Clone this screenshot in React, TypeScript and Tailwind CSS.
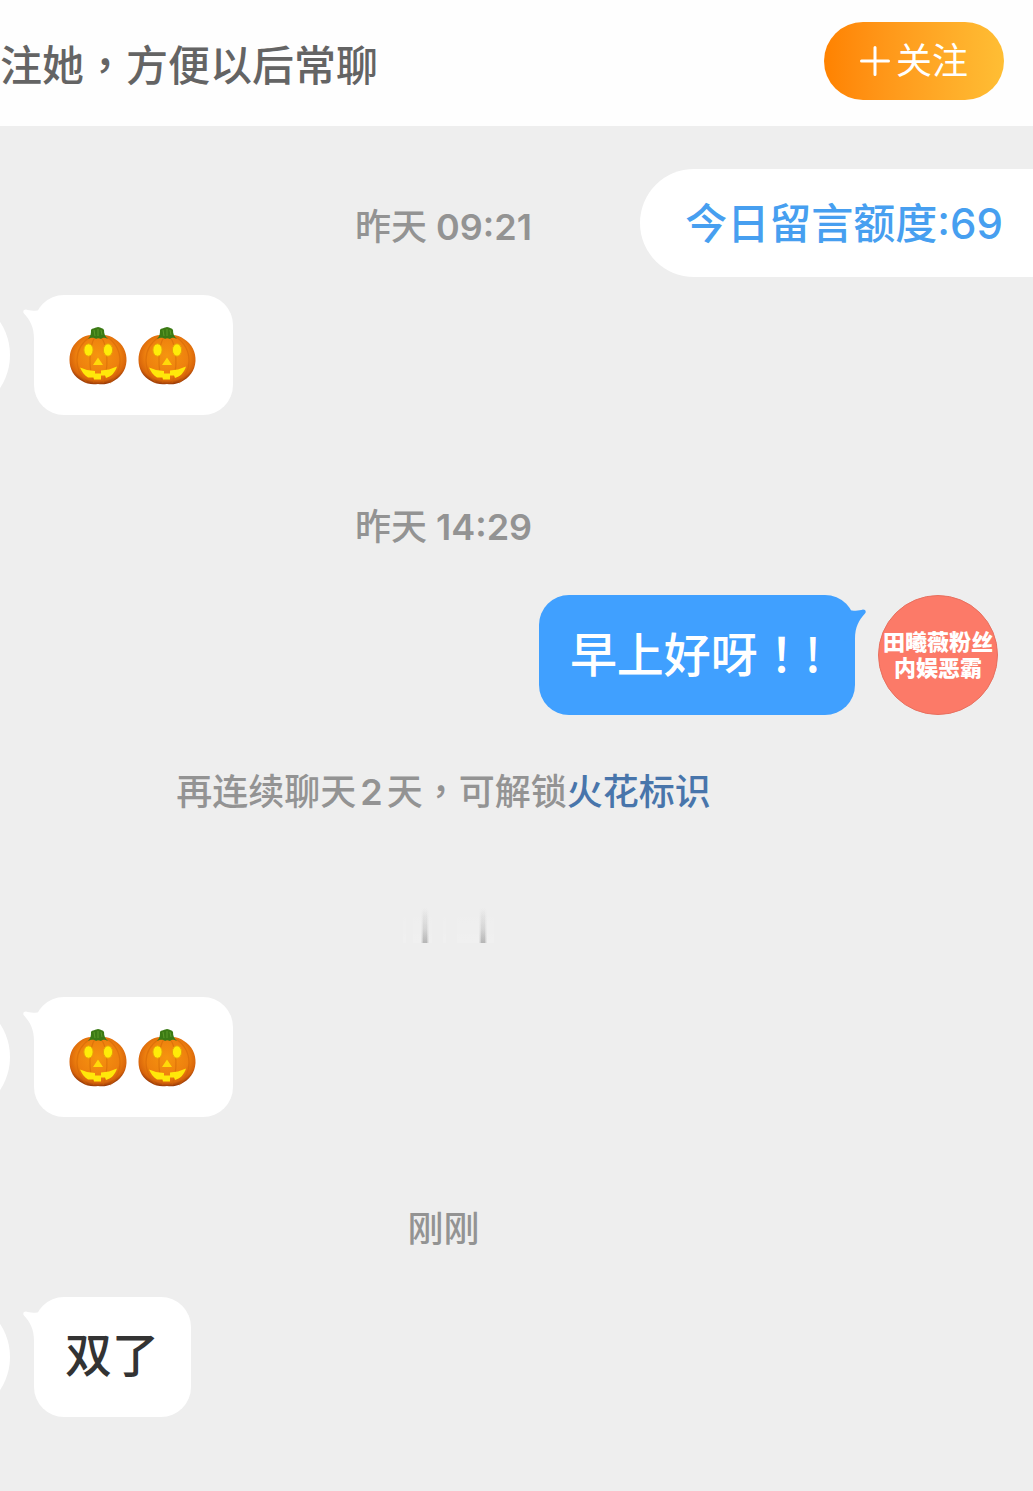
import React from 'react';

type Message =
  | { kind: 'pumpkins' }
  | { kind: 'text'; text: React.ReactNode };

// Full-width punctuation sits in the middle of its cell in the TC face
const Punct: React.FC<{ children: React.ReactNode }> = ({ children }) => (
  <span className="font-['Noto_Sans_CJK_TC',sans-serif]">{children}</span>
);

const Pumpkin: React.FC<{ id: string }> = ({ id }) => (
  <svg width="58" height="58" viewBox="0 0 58 58" role="img" aria-label="南瓜">
    <defs>
      <radialGradient id={id} cx="50%" cy="42%" r="58%">
        <stop offset="0" stopColor="#f6950f" />
        <stop offset="0.65" stopColor="#ee800e" />
        <stop offset="0.88" stopColor="#d8650b" />
        <stop offset="1" stopColor="#9c3c08" />
      </radialGradient>
    </defs>
    <path
      d="M28 9C34 7 41 8 46 12C54 17 58 25 57.5 34C57 44 51 51 43 55C38 57.5 33 57.5 29 57C24 57.5 18 57.5 13 54C5 50 0.5 42 0.5 33C0.5 24 4 17 11 12C16 8 23 7 28 9Z"
      fill={`url(#${id})`}
    />
    <g fill="none" stroke="#d06408" strokeWidth="1.2" opacity="0.5">
      <path d="M21 10C12 16 8 23 8 33C8 43 12 50 18 56" />
      <path d="M26 10C20 19 19 42 25 56" />
      <path d="M32 10C39 19 40 42 34 56" />
      <path d="M38 10C47 16 51 24 51 34C51 43 47 50 41 56" />
    </g>
    <path
      d="M19 12C22 9 22 6 22 3C23 1 27 1 29 0C32 1 34 1 35 3C35 7 36 9 39 12C36 11 34 10 32 12C30 11 28 11 27 12C24 10 22 11 19 12Z"
      fill="#3b7a14"
    />
    <path d="M25 3L26 9M29 2V9M32 3L33 8" stroke="#5c9a28" strokeWidth="1" fill="none" />
    <ellipse cx="19.5" cy="23" rx="4.6" ry="6.2" fill="#ffec08" stroke="#e8a008" strokeWidth="1" />
    <ellipse cx="39" cy="23" rx="4.6" ry="6.2" fill="#ffec08" stroke="#e8a008" strokeWidth="1" />
    <path d="M29 30.5L34 38H24Z" fill="#ffd90a" />
    <path
      d="M11 40.5L18 43L26 44V46.5H32V43.5L40 42.5L48 39.5C46 46 42 49.5 37 51L36 48.5H32V52.5H25L24.5 50.5H19C15 48 13 45 11 40.5Z"
      fill="#ffe80a"
    />
  </svg>
);

const Tail: React.FC<{ className: string }> = ({ className }) => (
  <svg width="24" height="34" viewBox="0 0 24 34" className={`absolute top-[14px] ${className}`} aria-hidden="true">
    <path d="M14 1.5C9 2 6 1.5 3 0.5C0.5 0.5 -0.5 2.5 1 4.5C7 11 11 18 11 30L24 32V0Z" fill="currentColor" />
  </svg>
);

const Timestamp: React.FC<{ day: string; time?: string }> = ({ day, time }) => (
  <p className="pr-[146px] text-center text-[36px] leading-[54px] font-medium text-[#939393]">
    {day}
    {time && <span className="font-semibold"> {time}</span>}
  </p>
);

const Incoming: React.FC<{ message: Message; id: string }> = ({ message, id }) => (
  <div className="mt-[41px] flex items-center gap-6">
    <div className="-ml-[110px] size-[120px] shrink-0 rounded-full bg-white" />
    <div className="relative flex h-[120px] items-center rounded-[30px] bg-white text-white">
      <Tail className="-left-[11px]" />
      {message.kind === 'pumpkins' ? (
        <div className="flex gap-[11px] pt-[2px] pr-[37px] pl-[35px]">
          <Pumpkin id={`${id}-a`} />
          <Pumpkin id={`${id}-b`} />
        </div>
      ) : (
        <p className="pr-[32px] pb-1 pl-[31px] text-[47px] leading-[64px] font-medium text-[#333333]">{message.text}</p>
      )}
    </div>
  </div>
);

// A time label that is still fading in
const FadingTimestamp: React.FC = () => (
  <div className="flex h-[54px] justify-center pr-[146px]">
    <svg width="100" height="54" viewBox="0 0 100 54" aria-hidden="true">
      <defs>
        <linearGradient id="fade-v" x1="0" y1="0" x2="0" y2="1">
          <stop offset="0" stopColor="#909090" stopOpacity="0" />
          <stop offset="0.6" stopColor="#909090" stopOpacity="0.3" />
          <stop offset="1" stopColor="#808080" stopOpacity="0.65" />
        </linearGradient>
        <linearGradient id="fade-light" x1="0" y1="0" x2="0" y2="1">
          <stop offset="0" stopColor="#ffffff" stopOpacity="0" />
          <stop offset="1" stopColor="#ffffff" stopOpacity="0.12" />
        </linearGradient>
      </defs>
      <g fill="url(#fade-light)">
        <rect x="9" y="6" width="3" height="35" />
        <rect x="19" y="6" width="19" height="35" />
        <rect x="49" y="6" width="3" height="35" />
        <rect x="63" y="6" width="37" height="35" />
      </g>
      <g fill="url(#fade-v)">
        <rect x="27" y="6" width="8" height="35" opacity="0.2" />
        <rect x="28" y="6" width="6" height="35" opacity="0.3" />
        <rect x="29" y="6" width="4" height="35" opacity="0.5" />
        <rect x="85" y="6" width="8" height="35" opacity="0.2" />
        <rect x="86" y="6" width="6" height="35" opacity="0.3" />
        <rect x="87" y="6" width="4" height="35" opacity="0.5" />
      </g>
    </svg>
  </div>
);

const Header: React.FC = () => (
  <header className="flex h-[126px] items-center justify-between bg-[#fefefe] pr-[29px]">
    <h1 className="pt-[2px] text-[42px] leading-[60px] font-medium whitespace-nowrap text-[#646464]">
      注她<Punct>，</Punct>方便以后常聊
    </h1>
    <button
      type="button"
      className="mb-1 flex h-[78px] w-[180px] items-center justify-center gap-[6px] rounded-[39px] bg-linear-to-r from-[#ff8200] to-[#ffbe34] text-white"
    >
      <svg width="30" height="30" viewBox="0 0 30 30" aria-hidden="true">
        <path d="M15 1.5V28.5M1.5 15H28.5" stroke="currentColor" strokeWidth="3" strokeLinecap="round" />
      </svg>
      <span className="text-[36px] leading-[52px]">关注</span>
    </button>
  </header>
);

export default function App() {
  return (
    <div className="min-h-screen overflow-hidden bg-[#eeeeee] font-['Inter','Noto_Sans_CJK_SC',sans-serif]">
      <Header />
      <main className="relative pt-[74px] pb-[74px]">
        <div className="absolute top-[43px] right-0 flex h-[108px] items-center rounded-l-[54px] bg-white pt-[2px] pr-[30px] pl-[45px] text-[42px] leading-[60px] font-medium text-[#479ff0]">
          今日留言额度:69
        </div>

        <section>
          <Timestamp day="昨天" time="09:21" />
          <Incoming id="first" message={{ kind: 'pumpkins' }} />
        </section>

        <section className="mt-[85px]">
          <Timestamp day="昨天" time="14:29" />
          <div className="mt-[41px] flex items-center justify-end gap-[23px] pr-[35px]">
            <div className="relative flex h-[120px] items-center rounded-[30px] bg-[#40a0ff] pr-[34px] pb-1 pl-[31px] text-[#40a0ff]">
              <Tail className="-right-[11px] -scale-x-100" />
              <p className="relative text-[47px] leading-[64px] font-medium text-white">
                早上好呀<Punct>！!</Punct>
              </p>
            </div>
            <div className="flex size-[120px] shrink-0 flex-col items-center justify-center rounded-full border border-[#e8705f] bg-[#fc7a68] text-[22px] leading-[26px] font-black whitespace-nowrap text-white">
              <span>田曦薇粉丝</span>
              <span>内娱恶霸</span>
            </div>
          </div>
          <p className="mt-[47px] pr-[146px] text-center text-[36px] leading-[54px] font-medium text-[#939393]">
            再连续聊天<span className="mx-1 font-semibold">2</span>天<Punct>，</Punct>可解锁
            <a href="#spark" className="text-[#4875ab]">火花标识</a>
          </p>
        </section>

        <section className="mt-[83px]">
          <FadingTimestamp />
          <Incoming id="second" message={{ kind: 'pumpkins' }} />
        </section>

        <section className="mt-[85px]">
          <Timestamp day="刚刚" />
          <Incoming id="third" message={{ kind: 'text', text: '双了' }} />
        </section>
      </main>
    </div>
  );
}
